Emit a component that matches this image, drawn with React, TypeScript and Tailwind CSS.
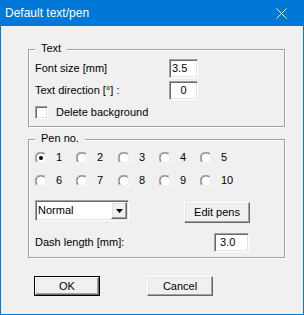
import React from "react";

const font = { fontFamily: '"Liberation Sans", Arial, sans-serif' };

function Sunken({ className = "", children }: { className?: string; children?: React.ReactNode }) {
  return (
    <div
      className={
        "box-border border border-t-[#a0a0a0] border-l-[#a0a0a0] border-b-white border-r-white bg-white shadow-[inset_1px_1px_0_#696969,inset_-1px_-1px_0_#e3e3e3] " +
        className
      }
    >
      {children}
    </div>
  );
}

function Raised({ className = "", children }: { className?: string; children?: React.ReactNode }) {
  return (
    <div
      className={
        "box-border border border-t-white border-l-white border-b-[#696969] border-r-[#696969] bg-[#f0f0f0] shadow-[inset_-1px_-1px_0_#a0a0a0,inset_1px_1px_0_#e3e3e3] flex items-center justify-center " +
        className
      }
    >
      {children}
    </div>
  );
}

function Radio({ checked }: { checked?: boolean }) {
  return (
    <svg width="12" height="12" viewBox="0 0 12 12" className="shrink-0">
      <circle cx="6" cy="6" r="5.5" fill="white" />
      <path d="M1.6 10.4 A6 6 0 0 1 10.4 1.6" stroke="#a0a0a0" strokeWidth="1" fill="none" transform="translate(0,0)" />
      <path d="M2.4 9.6 A5 5 0 0 1 9.6 2.4" stroke="#696969" strokeWidth="1" fill="none" />
      <path d="M10.4 1.6 A6 6 0 0 1 1.6 10.4" stroke="#ffffff" strokeWidth="1" fill="none" />
      <path d="M9.6 2.4 A5 5 0 0 1 2.4 9.6" stroke="#e3e3e3" strokeWidth="1" fill="none" />
      {checked && <circle cx="6" cy="6" r="2" fill="#000" />}
    </svg>
  );
}

function Group({ label, className = "", children }: { label: string; className?: string; children?: React.ReactNode }) {
  return (
    <div className={"relative box-border border border-[#a0a0a0] shadow-[1px_1px_0_#fff,inset_1px_1px_0_#fff] " + className}>
      <span className="absolute -top-[8px] left-[6px] px-[6px] bg-[#f0f0f0] text-[11px] leading-[13px] text-black">
        {label}
      </span>
      {children}
    </div>
  );
}

export default function App() {
  const pens = [1, 2, 3, 4, 5, 6, 7, 8, 9, 10];
  return (
    <div className="w-[304px] h-[315px] bg-[#0078d7] flex flex-col box-border" style={font}>
      <div className="h-[26px] flex items-center shrink-0">
        <span className="pl-[5px] text-white text-[12px] leading-[14px]">Default text/pen</span>
        <div className="ml-auto w-[46px] h-[26px] flex items-center justify-center">
          <svg width="11" height="11" viewBox="0 0 11 11">
            <path d="M0.5 0.5 L10.5 10.5 M10.5 0.5 L0.5 10.5" stroke="white" strokeWidth="1" />
          </svg>
        </div>
      </div>
      <div className="flex-1 mx-[1px] mb-[1px] bg-[#f0f0f0] flex flex-col text-[11px] leading-[13px] text-black">
        <Group label="Text" className="ml-[27px] mt-[23px] w-[257px] h-[78px] pl-[6px] pt-[9px]">
          <div className="flex items-center h-[19px]">
            <span className="w-[134px]">Font size [mm]</span>
            <Sunken className="w-[29px] h-[19px] flex items-center pl-[2px]">3.5</Sunken>
          </div>
          <div className="flex items-center h-[19px] mt-[3px]">
            <span className="w-[134px]">Text direction [°] :</span>
            <Sunken className="w-[29px] h-[19px] flex items-center justify-center">0</Sunken>
          </div>
          <div className="flex items-center h-[13px] mt-[6px] gap-[8px]">
            <Sunken className="w-[13px] h-[13px]" />
            <span>Delete background</span>
          </div>
        </Group>

        <Group label="Pen no." className="ml-[27px] mt-[12px] w-[257px] h-[119px] pl-[6px] pt-[11px]">
          <div className="grid grid-cols-[41px_42px_41px_41px_41px] gap-y-[10px]">
            {pens.map((p) => (
              <div key={p} className="flex items-center h-[13px] gap-[9px]">
                <Radio checked={p === 1} />
                <span>{p}</span>
              </div>
            ))}
          </div>
          <div className="flex items-start mt-[13px]">
            <Sunken className="w-[94px] h-[21px] flex items-center pl-[2px] pr-[1px]">
              <span>Normal</span>
              <Raised className="ml-auto w-[16px] h-[17px]">
                <svg width="7" height="4" viewBox="0 0 7 4">
                  <path d="M0 0 H7 L3.5 4 Z" fill="#000" />
                </svg>
              </Raised>
            </Sunken>
            <Raised className="ml-[55px] mt-[2px] w-[66px] h-[21px]">Edit pens</Raised>
          </div>
          <div className="flex items-center h-[19px] mt-[10px]">
            <span className="w-[179px]">Dash length [mm]:</span>
            <Sunken className="w-[35px] h-[19px] flex items-center pl-[5px]">3.0</Sunken>
          </div>
        </Group>

        <div className="flex mt-[18px] ml-[33px] gap-[47px]">
          <div className="w-[66px] h-[20px] border border-black box-border flex">
            <Raised className="flex-1">OK</Raised>
          </div>
          <Raised className="w-[66px] h-[20px]">Cancel</Raised>
        </div>
      </div>
    </div>
  );
}
